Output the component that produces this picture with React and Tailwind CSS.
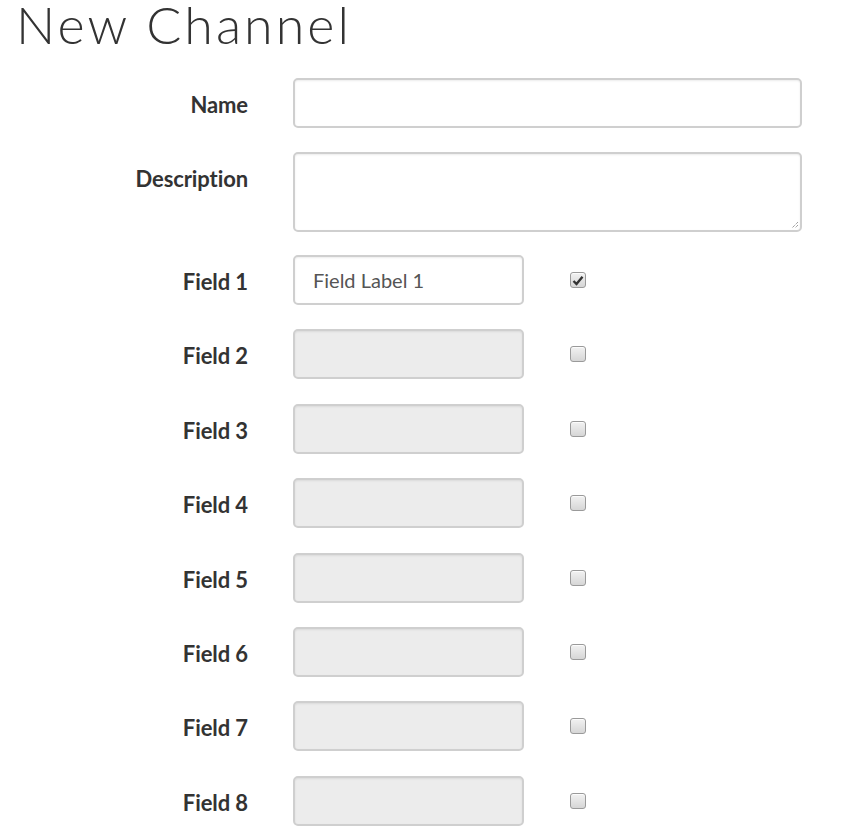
import React from "react";

function Check({ checked }) {
  return (
    <div className="w-[16px] h-[16px] rounded-[3px] border border-[#9a9a9a] bg-gradient-to-b from-[#f2f2f2] to-[#d6d6d6] shadow-[inset_0_1px_0_rgba(255,255,255,0.8)] flex items-center justify-center">
      {checked && (
        <svg width="12" height="11" viewBox="0 0 12 11">
          <path d="M1.5 6 L4.5 9 L10.5 1.8" fill="none" stroke="#333" strokeWidth="2.4" strokeLinejoin="miter" />
        </svg>
      )}
    </div>
  );
}

const inputBase =
  "border-2 border-[#cfcfcf] rounded-[5px] shadow-[inset_0_1px_2px_rgba(0,0,0,0.08)]";

const labelCls =
  "w-[248px] pt-[14px] text-right text-[22px] leading-[26px] font-bold text-[#333] tracking-[-0.1px]";

export default function App() {
  const fields = [1, 2, 3, 4, 5, 6, 7, 8];
  return (
    <div className="w-[841px] h-[838px] overflow-hidden bg-white" style={{ fontFamily: "Lato, 'Liberation Sans', sans-serif" }}>
      <h1 className="ml-[16px] pt-[1px] text-[52px] leading-[46px] font-light text-[#333] tracking-[3px]" style={{ fontFamily: "Lato, sans-serif" }}>
        New Channel
      </h1>
      <div className="mt-[31px] flex flex-col">
        <div className="flex">
          <div className={labelCls}>Name</div>
          <div className={`ml-[45px] w-[509px] h-[50px] bg-white ${inputBase}`} />
        </div>
        <div className="flex mt-[24px]">
          <div className={labelCls}>Description</div>
          <div className={`relative ml-[45px] w-[509px] h-[80px] bg-white ${inputBase}`}>
            <svg className="absolute right-[1px] bottom-[1px]" width="9" height="9" viewBox="0 0 9 9">
              <path d="M8 2 L2 8 M8 5 L5 8" stroke="#777" strokeWidth="1" strokeDasharray="1 1" />
            </svg>
          </div>
        </div>
        <div className="mt-[23px] flex flex-col gap-[24.4px]">
          {fields.map((n) => (
            <div key={n} className="flex">
              <div className={labelCls}>Field {n}</div>
              <div
                className={`ml-[45px] w-[231px] h-[50px] ${inputBase} ${n === 1 ? "bg-white" : "bg-[#ececec]"} flex items-center pl-[18px] text-[20px] text-[#555]`}
              >
                {n === 1 ? "Field Label 1" : ""}
              </div>
              <div className="ml-[46px] flex items-center">
                <Check checked={n === 1} />
              </div>
            </div>
          ))}
        </div>
      </div>
    </div>
  );
}
